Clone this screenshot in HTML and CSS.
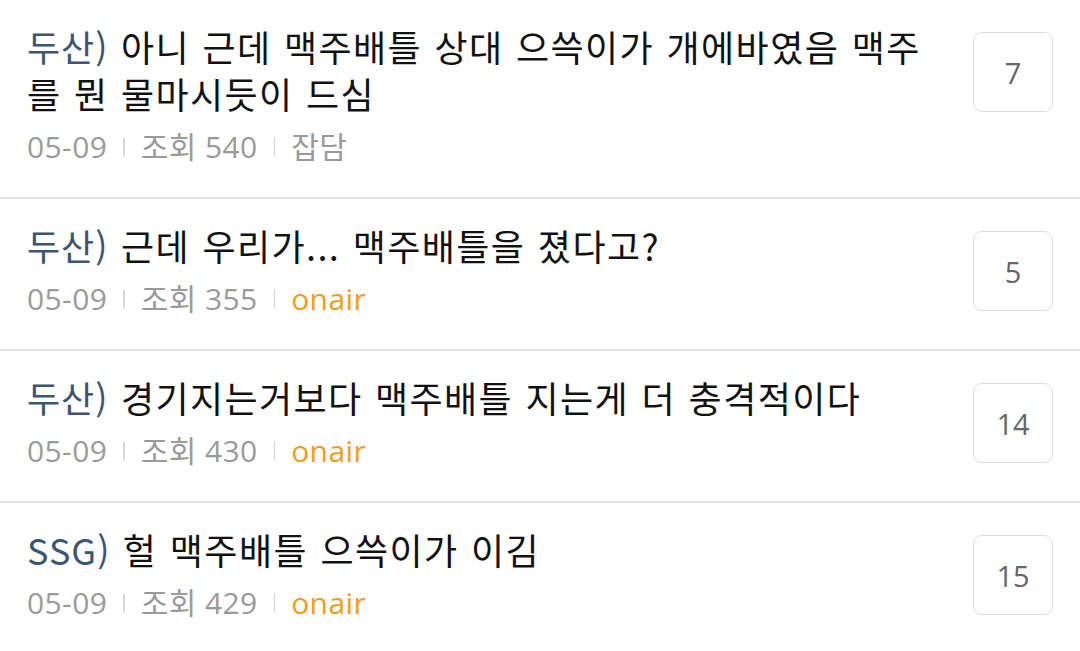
FILE: index.html
```html
<!DOCTYPE html>
<html lang="ko">

<head>
    <meta charset="UTF-8">
    <title>게시판</title>
    <link rel="stylesheet" href="styles.css">
</head>

<body>

    <ul class="list">
        <li class="item">
            <div class="body">
                <p class="title"><span class="team">두산)</span> 아니 근데 맥주배틀 상대 으쓱이가 개에바였음 맥주를 뭔 물마시듯이 드심</p>
                <p class="meta">
                    <span>05-09</span><i class="sep"></i><span>조회 540</span><i class="sep"></i><span>잡담</span>
                </p>
            </div>
            <span class="count">7</span>
        </li>
        <li class="item">
            <div class="body">
                <p class="title"><span class="team">두산)</span> 근데 우리가... 맥주배틀을 졌다고?</p>
                <p class="meta">
                    <span>05-09</span><i class="sep"></i><span>조회 355</span><i class="sep"></i><span class="onair">onair</span>
                </p>
            </div>
            <span class="count">5</span>
        </li>
        <li class="item">
            <div class="body">
                <p class="title"><span class="team">두산)</span> 경기지는거보다 맥주배틀 지는게 더 충격적이다</p>
                <p class="meta">
                    <span>05-09</span><i class="sep"></i><span>조회 430</span><i class="sep"></i><span class="onair">onair</span>
                </p>
            </div>
            <span class="count">14</span>
        </li>
        <li class="item">
            <div class="body">
                <p class="title"><span class="team">SSG)</span> 헐 맥주배틀 으쓱이가 이김</p>
                <p class="meta">
                    <span>05-09</span><i class="sep"></i><span>조회 429</span><i class="sep"></i><span class="onair">onair</span>
                </p>
            </div>
            <span class="count">15</span>
        </li>
    </ul>

</body>

</html>
```

FILE: styles.css
```css
body {
    margin: 0;
    background-color: white;
    font-family: "Noto Sans CJK KR", "Noto Sans", sans-serif;
}

.list {
    list-style: none;
    margin: 0;
    padding: 0;
}

.item {
    display: flex;
    align-items: flex-start;
    gap: 40px;
    padding: 23px 27px 28px 27px;
    border-bottom: 2px solid #e2e2e2;
}

.body {
    flex: 1;
}

.title {
    margin: 0;
    font-size: 36px;
    line-height: 47px;
    letter-spacing: 1.4px;
    word-spacing: 1px;
    color: #111;
}

.team {
    color: #3b5674;
    letter-spacing: 1px;
}

.meta {
    margin: 8px 0 0;
    display: flex;
    align-items: center;
    font-family: "Open Sans", "Noto Sans CJK KR", sans-serif;
    font-size: 30px;
    line-height: 44px;
    letter-spacing: 0.4px;
    color: #9a9a9a;
}

.sep {
    width: 1.5px;
    height: 18px;
    margin: 0 16px;
    background-color: #d6d6d6;
}

.onair {
    color: #f39c1a;
}

.count {
    flex: none;
    width: 78px;
    height: 78px;
    margin-top: 9px;
    display: flex;
    align-items: center;
    justify-content: center;
    border: 1.5px solid #dcdcdc;
    border-radius: 9px;
    font-family: "Open Sans", sans-serif;
    font-size: 29px;
    color: #666;
}
```
